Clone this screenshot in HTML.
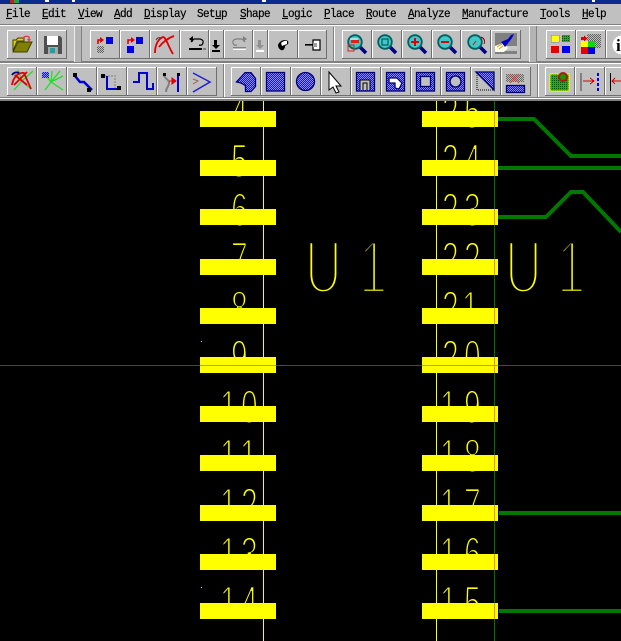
<!DOCTYPE html>
<html><head><meta charset="utf-8">
<style>
html,body{margin:0;padding:0;background:#000}
#w{position:relative;width:621px;height:641px;overflow:hidden;background:#000}
#bar{position:absolute;left:0;top:0;width:621px;height:101px;background:#c0c0c0}
#title{position:absolute;left:0;top:0;width:621px;height:4px;background:#0a2a8c}
.m{position:absolute;top:8px;font:11px/12px "Liberation Mono",monospace;letter-spacing:-.6px;color:#000;white-space:pre;-webkit-text-stroke:.2px #000;transform:scaleY(1.1);transform-origin:0 0}
.m u{text-decoration:underline}
svg{position:absolute;left:0;top:0}
.n{font-family:"Liberation Sans",sans-serif;font-size:47px;fill:#ff0;stroke:#000;stroke-width:1.9px}
.u{font-family:"Liberation Sans",sans-serif;font-size:75px;fill:#ff0;stroke:#000;stroke-width:4.4px}
</style></head><body>
<div id="w">
<div id="bar">
<div id="title"></div>
<div class="m" style="left:6px"><u>F</u>ile</div>
<div class="m" style="left:42px"><u>E</u>dit</div>
<div class="m" style="left:78px"><u>V</u>iew</div>
<div class="m" style="left:114px"><u>A</u>dd</div>
<div class="m" style="left:144px"><u>D</u>isplay</div>
<div class="m" style="left:197px">Set<u>u</u>p</div>
<div class="m" style="left:240px"><u>S</u>hape</div>
<div class="m" style="left:282px"><u>L</u>ogic</div>
<div class="m" style="left:324px"><u>P</u>lace</div>
<div class="m" style="left:366px"><u>R</u>oute</div>
<div class="m" style="left:408px"><u>A</u>nalyze</div>
<div class="m" style="left:462px"><u>M</u>anufacture</div>
<div class="m" style="left:540px"><u>T</u>ools</div>
<div class="m" style="left:582px"><u>H</u>elp</div>
</div>

<svg width="621" height="101" viewBox="0 0 621 101" shape-rendering="crispEdges">
<defs>
<pattern id="d" width="2" height="2" patternUnits="userSpaceOnUse"><rect width="2" height="2" fill="#1010f0"/><rect width="1" height="1" fill="#9090f0"/><rect x="1" y="1" width="1" height="1" fill="#9090f0"/></pattern>
<pattern id="g" width="2" height="2" patternUnits="userSpaceOnUse"><rect width="2" height="2" fill="#c0c0c0"/><rect width="1" height="1" fill="#606060"/><rect x="1" y="1" width="1" height="1" fill="#606060"/></pattern>
<pattern id="gg" width="2" height="2" patternUnits="userSpaceOnUse"><rect width="2" height="2" fill="#00c000"/><rect width="1" height="1" fill="#004000"/></pattern>
</defs>
<!-- top title bits -->
<rect x="10" y="0" width="4" height="3" fill="#c02020"/><rect x="14" y="0" width="5" height="3" fill="#20a040"/>
<rect x="45" y="0" width="4" height="2" fill="#fff"/><rect x="72" y="0" width="3" height="2" fill="#fff"/><rect x="262" y="0" width="4" height="2" fill="#fff"/><rect x="592" y="0" width="3" height="2" fill="#fff"/>
<!-- bands -->
<rect x="0" y="24" width="621" height="1" fill="#808080"/><rect x="0" y="25" width="621" height="1" fill="#fff"/>
<rect x="0" y="61" width="621" height="2" fill="#808080"/><rect x="0" y="63" width="621" height="1" fill="#fff"/>
<rect x="0" y="97" width="621" height="1" fill="#808080"/><rect x="0" y="98" width="621" height="1" fill="#fff"/><rect x="0" y="99" width="621" height="2" fill="#808080"/>
<!-- handles -->
<rect x="74" y="26" width="8" height="36" fill="#b4b4b4"/><rect x="74" y="26" width="1" height="36" fill="#eee"/><rect x="81" y="26" width="1" height="36" fill="#808080"/>
<rect x="529" y="26" width="8" height="36" fill="#b4b4b4"/><rect x="529" y="26" width="1" height="36" fill="#eee"/><rect x="536" y="26" width="1" height="36" fill="#808080"/>
<rect x="333" y="27" width="1" height="34" fill="#808080"/><rect x="334" y="27" width="1" height="34" fill="#fff"/>
<rect x="223" y="64" width="1" height="33" fill="#808080"/><rect x="224" y="64" width="1" height="33" fill="#fff"/>
<rect x="537" y="64" width="1" height="33" fill="#808080"/><rect x="538" y="64" width="1" height="33" fill="#fff"/>

<!-- buttons -->
<g fill="none">
<g stroke="#fff" stroke-width="1">
<path d="M7.5 58V30.5H37M37.5 58V30.5H67M90.5 58V30.5H120M120.5 58V30.5H150M150.5 58V30.5H180M180.5 58V30.5H209M209.5 58V30.5H224M224.5 58V30.5H253M253.5 58V30.5H268M268.5 58V30.5H298M298.5 58V30.5H327M342.5 58V30.5H372M372.5 58V30.5H402M402.5 58V30.5H432M432.5 58V30.5H461M461.5 58V30.5H491M491.5 58V30.5H521M546.5 58V30.5H576M576.5 58V30.5H606M606.5 58V30.5H621"/>
<path d="M7.5 95V67.5H37M37.5 95V67.5H67M67.5 95V67.5H97M97.5 95V67.5H127M127.5 95V67.5H157M157.5 95V67.5H187M187.5 95V67.5H217M231.5 95V67.5H261M261.5 95V67.5H291M291.5 95V67.5H321M321.5 95V67.5H351M351.5 95V67.5H381M381.5 95V67.5H411M411.5 95V67.5H441M441.5 95V67.5H471M471.5 95V67.5H501M501.5 95V67.5H531M545.5 95V67.5H575M575.5 95V67.5H605M605.5 95V67.5H621"/>
</g>
<g stroke="#6e6e6e" stroke-width="1">
<path d="M7 58.500H36.500V30M37 58.500H66.500V30M90 58.500H119.500V30M120 58.500H149.500V30M150 58.500H179.500V30M180 58.500H208.500V30M209 58.500H223.500V30M224 58.500H252.500V30M253 58.500H267.500V30M268 58.500H297.500V30M298 58.500H326.500V30M342 58.500H371.500V30M372 58.500H401.500V30M402 58.500H431.500V30M432 58.500H460.500V30M461 58.500H490.500V30M491 58.500H520.500V30M546 58.500H575.500V30M576 58.500H605.500V30M606 58.500H621"/>
<path d="M7 95.500H36.500V67M37 95.500H66.500V67M67 95.500H96.500V67M97 95.500H126.500V67M127 95.500H156.500V67M157 95.500H186.500V67M187 95.500H216.500V67M231 95.500H260.500V67M261 95.500H290.500V67M291 95.500H320.500V67M321 95.500H350.500V67M351 95.500H380.500V67M381 95.500H410.500V67M411 95.500H440.500V67M441 95.500H470.500V67M471 95.500H500.500V67M501 95.500H530.500V67M545 95.500H574.500V67M575 95.500H604.500V67M605 95.500H621"/>
</g>
</g>

<g shape-rendering="auto">
<!-- open folder -->
<path d="M13 51V40h3l2-2h6v3h-7z" fill="#d8d800" stroke="#404000"/>
<path d="M13 52l5-10h14l-5 10z" fill="#808000" stroke="#404000"/>
<path d="M22 39q3-4 7-2l0 3" fill="none" stroke="#e04040" stroke-width="1.4"/>
<path d="M27 39h4l-2 3z" fill="#e04040"/>
<!-- floppy -->
<path d="M44 36h16l2 2v16h-18z" fill="#505050"/>
<rect x="47" y="36" width="11" height="9" fill="#fff"/>
<rect x="48" y="47" width="10" height="7" fill="#a8a8a8"/><rect x="50" y="48" width="5" height="5" fill="#20a0a0"/>
<!-- place -->
<path d="M98 44v-4h3" fill="none" stroke="#e00000" stroke-width="1.6"/><path d="M100 37l4 3-4 3z" fill="#e00000"/>
<rect x="106" y="37" width="7" height="7" fill="#0000e0"/><rect x="97" y="46" width="7" height="7" fill="url(#g)"/>
<path d="M128 44v-4h3" fill="none" stroke="#e00000" stroke-width="1.6"/><path d="M131 37l4 3-4 3z" fill="#e00000"/>
<rect x="136" y="37" width="7" height="7" fill="#0000e0"/><rect x="127" y="46" width="7" height="7" fill="#0000e0"/>
<!-- red X -->
<path d="M155 53c0-8 3-14 8-16 3 0 5 9 10 17" fill="none" stroke="#e00000" stroke-width="1.8"/>
<path d="M159 47c4-5 9-9 15-11" fill="none" stroke="#e00000" stroke-width="1.8"/>
<path d="M156 40c1-2 3-3 5-2" fill="none" stroke="#404040" stroke-width="1"/>
<!-- undo -->
<path d="M191 42l3-3h6q4 1 3 4t-4 2" fill="none" stroke="#000" stroke-width="1.2"/>
<path d="M193 36v6l-4-3z" fill="#000"/>
<rect x="189" y="48" width="13" height="2" fill="#000"/><rect x="203" y="48" width="3" height="2" fill="#808080"/>
<path d="M214 40h3v5h3l-4 4-4-4h2z" fill="#000"/><rect x="212" y="50" width="8" height="2" fill="#000"/>
<!-- redo disabled -->
<path d="M245 42l-3-3h-6q-4 1-3 4t4 2" fill="none" stroke="#808080" stroke-width="1.2"/>
<path d="M243 36v6l4-3z" fill="#808080"/>
<rect x="233" y="48" width="13" height="2" fill="#fff"/><rect x="233" y="47" width="13" height="1.5" fill="#808080"/>
<path d="M258 40h3v5h3l-4 4-4-4h2z" fill="#909090"/><rect x="256" y="50" width="8" height="2" fill="#fff"/>
<!-- blob -->
<path d="M278 45c1-3 4-5 7-5s4 2 3 4l-3 2c0 3-2 5-4 4s-3-3-3-5z" fill="#000"/>
<path d="M281 43c1-1 4-3 6-2l0 3-5 2z" fill="#fff"/>
<!-- pin -->
<rect x="305" y="44" width="8" height="1.6" fill="#000"/>
<path d="M313 40h7v10h-7z" fill="#fff" stroke="#000" stroke-width="1.2"/><rect x="313" y="43" width="4" height="4" fill="#a0a0a0"/>
<!-- magnifiers -->
<g fill="none">
<path d="M360 47l6 6" stroke="#000080" stroke-width="3.500"/>
<circle cx="355" cy="42" r="6.800" fill="#40c8c8" stroke="#006060" stroke-width="1.800"/>
<rect x="348" y="45" width="6" height="6" stroke="#e02020" stroke-width="1"/>
<path d="M350 39h8" stroke="#fff"/><rect x="351" y="40" width="8" height="3" fill="#e02020"/>
<path d="M390 47l6 6" stroke="#000080" stroke-width="3.500"/><circle cx="385" cy="42" r="6.800" fill="#40c8c8" stroke="#006060" stroke-width="1.800"/><rect x="382" y="39" width="6" height="6" stroke="#004040"/>
<path d="M420 47l6 6" stroke="#000080" stroke-width="3.500"/><circle cx="415" cy="42" r="6.800" fill="#40c8c8" stroke="#006060" stroke-width="1.800"/><path d="M411 42h8M415 38v8" stroke="#e00000" stroke-width="2"/>
<path d="M450 47l6 6" stroke="#000080" stroke-width="3.500"/><circle cx="445" cy="42" r="6.800" fill="#40c8c8" stroke="#006060" stroke-width="1.800"/><path d="M441 42h8" stroke="#e00000" stroke-width="2"/>
<path d="M480 47l6 6" stroke="#000080" stroke-width="3.500"/><circle cx="475" cy="42" r="6.800" fill="#40c8c8" stroke="#006060" stroke-width="1.800"/><path d="M473 45l3-4" stroke="#e00000"/><path d="M481 37q5 2 3 7" stroke="#a00000"/>
</g>
<!-- brush -->
<rect x="495" y="33" width="22" height="13" fill="#808080"/><rect x="495" y="46" width="22" height="3" fill="#c8c8c8"/><rect x="495" y="51" width="22" height="3" fill="#808080"/>
<path d="M495 46l8-3 5 5-4 4h-9z" fill="#fffff0"/>
<path d="M501 42l7-3 3-4 3-1-2 4-3 4-4 5z" fill="#0000c0"/>
<path d="M497 47l5-3M499 49l4-3" stroke="#d0a000" fill="none"/>
</g>
<!-- colours -->
<rect x="551" y="35" width="8" height="7" fill="#ffff00" stroke="#808080" stroke-width=".5"/>
<rect x="562" y="35" width="8" height="7" fill="url(#gg)"/>
<rect x="551" y="46" width="8" height="7" fill="#e80000"/>
<rect x="562" y="46" width="8" height="7" fill="#0000e8"/>
<rect x="587" y="34" width="14" height="14" fill="url(#g)"/>
<path d="M581 40v-3h3v-2l3 3.500-3 3.500v-2z" fill="#e00000"/>
<rect x="581" y="41" width="7" height="6" fill="#ffff00"/><rect x="588" y="41" width="7" height="6" fill="#00e000"/>
<rect x="581" y="47" width="7" height="7" fill="#e80000"/><rect x="588" y="47" width="7" height="7" fill="#0000e8"/>
<circle cx="622" cy="45" r="9.500" fill="#fff" shape-rendering="auto"/>
<text x="616" y="51" font-family="Liberation Serif,serif" font-weight="bold" font-size="17" fill="#000" shape-rendering="auto">i</text>

<g shape-rendering="auto">
<!-- ratsnest x -->
<path d="M14 90l8-9 9 8M22 81l-4-11M22 81l11-10M14 75l8 6" fill="none" stroke="#20e020" stroke-width="1.2"/>
<path d="M12 85c1-7 6-13 12-12l7 16" fill="none" stroke="#e00000" stroke-width="1.800"/>
<path d="M15 75l12 10M27 72l-13 13" fill="none" stroke="#e00000" stroke-width="1.800"/>
<path d="M12 75c2-3 5-3 7-2" fill="none" stroke="#000080" stroke-width="1.800"/>
<path d="M45 75l6 7 12-6M45 90l6-8 12 8M52 71l-1 11M60 71l-9 11" fill="none" stroke="#20e020" stroke-width="1.300"/>
<rect x="42" y="72" width="7" height="6" fill="url(#d)"/>
<!-- diagonal -->
<path d="M75 76l5 6h4l8 8" fill="none" stroke="#0000d0" stroke-width="2.500"/><rect x="73" y="73" width="4" height="4" fill="#000"/><rect x="87" y="88" width="4" height="4" fill="#000"/>
<!-- L trace -->
<path d="M105 76h10v13h4" fill="none" stroke="#a0a0a0" stroke-width="2" stroke-dasharray="2 1"/>
<path d="M107 76v13h11" fill="none" stroke="#0000d0" stroke-width="2"/>
<rect x="101" y="74" width="4" height="4" fill="#000"/><rect x="117" y="86" width="4" height="4" fill="#000"/>
<!-- wave -->
<path d="M133 82h6v-9h8v16h6v-6" fill="none" stroke="#0000d0" stroke-width="2"/>
<!-- shove -->
<path d="M164 75c1 4 5 4 5 8s-3 4-3 9" fill="none" stroke="#808080" stroke-width="2"/>
<path d="M178 75v17" stroke="#0000d0" stroke-width="2"/>
<rect x="163" y="73" width="3" height="3" fill="#000"/><rect x="177" y="73" width="3" height="3" fill="#000"/>
<path d="M169 81h5M172 78l4 3-4 3z" fill="#e00000" stroke="#e00000" stroke-width="1"/>
<!-- chevron -->
<path d="M193 73l17 9-17 10" fill="none" stroke="#2020d0" stroke-width="1.500"/>
<path d="M193 79l5 2-5 3" fill="none" stroke="#a06060"/>
</g>
<!-- shapes -->
<g stroke="#000070" stroke-width="1.300" shape-rendering="auto">
<path d="M236.500 82L245 72.700H251L255.500 78.500V86.500L251 91.500H245.500V85.500L241 83z" fill="url(#d)"/>
<rect x="266.500" y="72.500" width="18" height="18.500" fill="url(#d)"/>
<circle cx="305.500" cy="81.500" r="9" fill="url(#d)"/>
<rect x="356.500" y="72.500" width="18" height="18.500" fill="url(#d)"/>
<rect x="386.500" y="72.500" width="18" height="18.500" fill="url(#d)"/>
<path d="M389 78h8l5 5-3 6-4-1v-5h-6z" fill="#fff"/>
<rect x="416.500" y="72.500" width="18" height="18.500" fill="url(#d)"/>
<rect x="420.500" y="76.500" width="10" height="10" fill="#c0c0c0"/>
<rect x="446.500" y="72.500" width="18" height="18.500" fill="url(#d)"/>
<circle cx="455.500" cy="81.500" r="5.500" fill="#c0c0c0"/>
<path d="M476 72h18v18z" fill="url(#d)"/>
<rect x="506.500" y="85.500" width="18" height="7" fill="url(#d)"/>
</g>
<path d="M329 72v18l4-3 3 6 3-1-3-6h5z" fill="#fff" stroke="#000" shape-rendering="auto"/>
<path d="M360 90v-10h10v10M363 90v-7h4v7" fill="#c0c0c0" stroke="#000"/>
<path d="M477 73v17h17" fill="none" stroke="#000" stroke-dasharray="1 1"/>
<rect x="506" y="74" width="18" height="8" fill="url(#g)"/>
<path d="M510 74l9 9M519 74l-9 9" stroke="#e03030" shape-rendering="auto"/>
<!-- board -->
<rect x="550" y="74" width="19" height="17" fill="url(#gg)" stroke="#ffff00"/>
<circle cx="563" cy="77" r="4" fill="#00a000" stroke="#c01010" stroke-width="2" shape-rendering="auto"/>
<!-- measure -->
<rect x="580" y="73" width="2" height="18" fill="#808080"/>
<path d="M583 81h10" stroke="#e00000"/><path d="M590 78l4 3-4 3" fill="none" stroke="#e00000"/>
<path d="M598 73v18" stroke="#0000e0" stroke-width="2" stroke-dasharray="3 2"/>
<rect x="610" y="73" width="1" height="18" fill="#000"/>
<path d="M612 81h9M615 78l-3 3 3 3" fill="none" stroke="#e00000"/>
</svg>

<svg width="621" height="641" viewBox="0 0 621 641" style="clip-path:inset(101px 0 0 0)">
<g class="n">
<text transform="translate(231,128) scale(.64,1)">4</text>
<text transform="translate(231,177) scale(.64,1)">5</text>
<text transform="translate(231,226) scale(.64,1)">6</text>
<text transform="translate(231,275) scale(.64,1)">7</text>
<text transform="translate(231,324) scale(.64,1)">8</text>
<text transform="translate(231,373) scale(.64,1)">9</text>
<text transform="translate(220,423) scale(.64,1)">1</text><text transform="translate(241,423) scale(.64,1)">0</text>
<text transform="translate(220,472) scale(.64,1)">1</text><text transform="translate(240,472) scale(.64,1)">1</text>
<text transform="translate(220,521) scale(.64,1)">1</text><text transform="translate(241,521) scale(.64,1)">2</text>
<text transform="translate(220,570) scale(.64,1)">1</text><text transform="translate(241,570) scale(.64,1)">3</text>
<text transform="translate(220,619) scale(.64,1)">1</text><text transform="translate(241,619) scale(.64,1)">4</text>
<text transform="translate(442,128) scale(.64,1)">2</text><text transform="translate(464,128) scale(.64,1)">5</text>
<text transform="translate(442,177) scale(.64,1)">2</text><text transform="translate(464,177) scale(.64,1)">4</text>
<text transform="translate(442,226) scale(.64,1)">2</text><text transform="translate(464,226) scale(.64,1)">3</text>
<text transform="translate(442,275) scale(.64,1)">2</text><text transform="translate(464,275) scale(.64,1)">2</text>
<text transform="translate(442,324) scale(.64,1)">2</text><text transform="translate(462,324) scale(.64,1)">1</text>
<text transform="translate(442,373) scale(.64,1)">2</text><text transform="translate(464,373) scale(.64,1)">0</text>
<text transform="translate(440,423) scale(.64,1)">1</text><text transform="translate(464,423) scale(.64,1)">9</text>
<text transform="translate(440,472) scale(.64,1)">1</text><text transform="translate(464,472) scale(.64,1)">8</text>
<text transform="translate(440,521) scale(.64,1)">1</text><text transform="translate(464,521) scale(.64,1)">7</text>
<text transform="translate(440,570) scale(.64,1)">1</text><text transform="translate(464,570) scale(.64,1)">6</text>
<text transform="translate(440,619) scale(.64,1)">1</text><text transform="translate(464,619) scale(.64,1)">5</text>
</g>
<g class="u">
<text transform="translate(305,293) scale(.68,1)">U</text>
<text transform="translate(359,293) scale(.68,1)">1</text>
<text transform="translate(505,293) scale(.68,1)">U</text>
<text transform="translate(557,293) scale(.68,1)">1</text>
</g>
<g shape-rendering="crispEdges">
<rect x="263" y="101" width="1" height="540" fill="#ff0"/>
<rect x="436" y="101" width="1" height="540" fill="#ff0"/>
<rect x="201" y="341" width="1" height="1" fill="#ff0"/><rect x="201" y="587" width="1" height="1" fill="#ff0"/>
<rect x="0" y="365" width="621" height="1" fill="#007400"/>
<rect x="494" y="101" width="1" height="540" fill="#007400"/>
<g fill="#ff0">
<rect x="200" y="111" width="76" height="16"/><rect x="422" y="111" width="76" height="16"/>
<rect x="200" y="160" width="76" height="16"/><rect x="422" y="160" width="76" height="16"/>
<rect x="200" y="209" width="76" height="16"/><rect x="422" y="209" width="76" height="16"/>
<rect x="200" y="259" width="76" height="16"/><rect x="422" y="259" width="76" height="16"/>
<rect x="200" y="308" width="76" height="16"/><rect x="422" y="308" width="76" height="16"/>
<rect x="200" y="357" width="76" height="16"/><rect x="422" y="357" width="76" height="16"/>
<rect x="200" y="406" width="76" height="16"/><rect x="422" y="406" width="76" height="16"/>
<rect x="200" y="455" width="76" height="16"/><rect x="422" y="455" width="76" height="16"/>
<rect x="200" y="505" width="76" height="16"/><rect x="422" y="505" width="76" height="16"/>
<rect x="200" y="554" width="76" height="16"/><rect x="422" y="554" width="76" height="16"/>
<rect x="200" y="603" width="76" height="16"/><rect x="422" y="603" width="76" height="16"/>
</g>
<g fill="#e89000">
<rect x="200" y="365" width="76" height="1"/><rect x="422" y="365" width="76" height="1"/>
<rect x="494" y="111" width="1" height="16"/><rect x="494" y="160" width="1" height="16"/><rect x="494" y="209" width="1" height="16"/><rect x="494" y="259" width="1" height="16"/><rect x="494" y="308" width="1" height="16"/><rect x="494" y="357" width="1" height="16"/><rect x="494" y="406" width="1" height="16"/><rect x="494" y="455" width="1" height="16"/><rect x="494" y="505" width="1" height="16"/><rect x="494" y="554" width="1" height="16"/><rect x="494" y="603" width="1" height="16"/>
</g>
</g>
<g fill="none" stroke="#007800" stroke-width="4">
<path d="M498 119H534L571 156H621"/>
<path d="M498 168H621"/>
<path d="M498 217H546L571 192H583L621 232"/>
<path d="M499 513H621"/>
<path d="M499 611H621"/>
</g>
</svg>
</div>
</body></html>
